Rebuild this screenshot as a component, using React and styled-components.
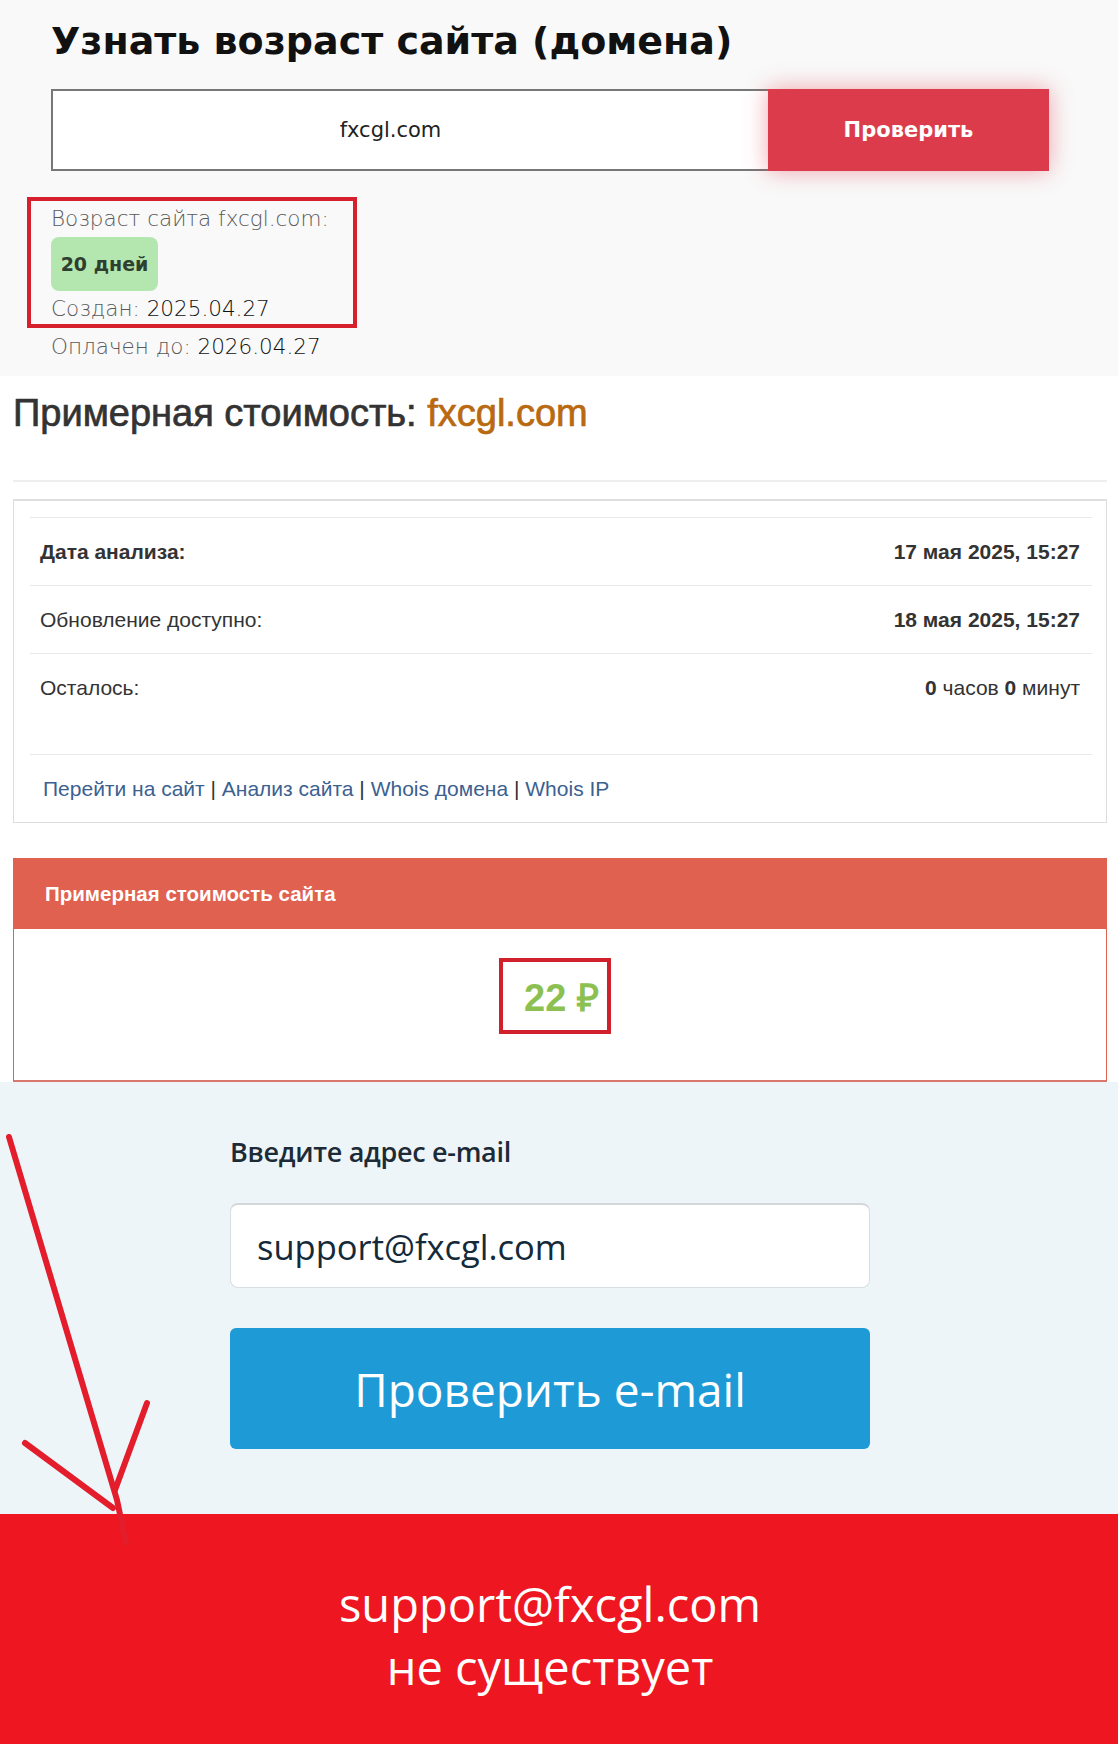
import React from "react";
import styled, { createGlobalStyle } from "styled-components";

const GlobalStyle = createGlobalStyle`
	* {
		box-sizing: border-box;
	}
	body {
		margin: 0;
		background: #fff;
		font-family: "Liberation Sans", Arial, sans-serif;
	}
	p {
		margin: 0;
	}
`;

const rows = [
	{ label: "Дата анализа:", strongLabel: true, value: <b>17 мая 2025, 15:27</b> },
	{ label: "Обновление доступно:", value: <b>18 мая 2025, 15:27</b> },
	{
		label: "Осталось:",
		value: (
			<>
				<b>0</b> часов <b>0</b> минут
			</>
		),
	},
];

const links = ["Перейти на сайт", "Анализ сайта", "Whois домена", "Whois IP"];

function App() {
	return (
		<Page>
			<GlobalStyle />
			<AgeSection>
				<Title>Узнать возраст сайта (домена)</Title>
				<SearchForm>
					<DomainInput value="fxcgl.com" readOnly />
					<CheckButton>Проверить</CheckButton>
				</SearchForm>
				<ResultBox>
					<InfoLine>Возраст сайта fxcgl.com:</InfoLine>
					<AgeBadge>20 дней</AgeBadge>
					<InfoLine>
						Создан: <Value>2025.04.27</Value>
					</InfoLine>
				</ResultBox>
				<InfoLine $gap>
					Оплачен до: <Value>2026.04.27</Value>
				</InfoLine>
			</AgeSection>

			<CostSection>
				<CostHeading>
					Примерная стоимость: <Domain>fxcgl.com</Domain>
				</CostHeading>
				<Divider />
				<InfoCard>
					{rows.map((row) => (
						<Row key={row.label}>
							<RowLabel $bold={row.strongLabel}>{row.label}</RowLabel>
							<RowValue>{row.value}</RowValue>
						</Row>
					))}
					<LinksBar>
						{links.map((link, i) => (
							<React.Fragment key={link}>
								{i > 0 && <Pipe> | </Pipe>}
								<LinkItem href="#">{link}</LinkItem>
							</React.Fragment>
						))}
					</LinksBar>
				</InfoCard>
				<PriceCard>
					<PriceHeader>Примерная стоимость сайта</PriceHeader>
					<PriceBody>
						<PriceMark>22 ₽</PriceMark>
					</PriceBody>
				</PriceCard>
			</CostSection>

			<EmailSection>
				<EmailForm>
					<EmailLabel>Введите адрес e-mail</EmailLabel>
					<EmailInput value="support@fxcgl.com" readOnly />
					<EmailButton>Проверить e-mail</EmailButton>
				</EmailForm>
			</EmailSection>

			<ErrorBanner>
				<p>support@fxcgl.com</p>
				<p>не существует</p>
			</ErrorBanner>

			<Arrow viewBox="0 0 160 420" width="160" height="420">
				<g
					stroke="#e31d2b"
					strokeWidth="6"
					strokeLinecap="round"
					strokeLinejoin="round"
					fill="none"
				>
					<path d="M9 7 L117 370 L126 413" />
					<path d="M25 313 L113 378" />
					<path d="M147 273 L115 360" />
				</g>
			</Arrow>
		</Page>
	);
}

export default App;

const Page = styled.div`
	position: relative;
	width: 1118px;
	overflow: hidden;
`;

/* ---------- top block ---------- */
const AgeSection = styled.section`
	background: #f9f9f9;
	height: 376px;
	padding: 18px 0 0 51px;
	font-family: "DejaVu Sans", Verdana, sans-serif;
`;
const Title = styled.h1`
	margin: 0;
	font-size: 38px;
	line-height: 46px;
	font-weight: 700;
	color: #111;
`;
const SearchForm = styled.div`
	display: flex;
	margin-top: 25px;
	height: 82px;
`;
const DomainInput = styled.input`
	width: 717px;
	height: 100%;
	border: 2px solid #777;
	border-right: none;
	background: #fff;
	padding: 0 40px 0 0;
	text-align: center;
	font-family: "DejaVu Sans", Verdana, sans-serif;
	font-size: 21px;
	color: #222;
	outline: none;
`;
const CheckButton = styled.button`
	width: 281px;
	height: 100%;
	border: none;
	background: #dc3b4b;
	color: #fff;
	font-family: "DejaVu Sans", Verdana, sans-serif;
	font-weight: 700;
	font-size: 21px;
	box-shadow: 0 0 22px rgba(226, 60, 78, 0.45);
	cursor: pointer;
`;
const ResultBox = styled.div`
	width: 330px;
	margin: 26px 0 0 -24px;
	padding: 4px 0 2px 20px;
	border: 4px solid #d6202e;
`;
const InfoLine = styled.p`
	font-size: 21.5px;
	line-height: 27px;
	color: #5a5a5a;
	margin-top: ${(p) => (p.$gap ? "5px" : "0")} !important;
	font-weight: 300;
	white-space: nowrap;
`;
const Value = styled.span`
	color: #111;
`;
const AgeBadge = styled.div`
	display: inline-flex;
	align-items: center;
	justify-content: center;
	width: 107px;
	height: 54px;
	margin: 5px 0 4px;
	border-radius: 8px;
	background: #b4e6b0;
	color: #2f3f2f;
	font-weight: 700;
	font-size: 19px;
`;

/* ---------- cost block ---------- */
const CostSection = styled.section`
	padding: 14px 11px 0 13px;
	background: #fff;
`;
const CostHeading = styled.h2`
	margin: 0;
	font-size: 38px;
	line-height: 46px;
	font-weight: 400;
	color: #333;
	-webkit-text-stroke: 0.7px #333;
`;
const Domain = styled.span`
	color: #b9690f;
	-webkit-text-stroke: 0.7px #b9690f;
`;
const Divider = styled.hr`
	margin: 44px 0 0;
	border: none;
	border-top: 2px solid #eeeeee;
`;
const InfoCard = styled.div`
	margin-top: 17px;
	border: 1px solid #dddddd;
	border-top: 2px solid #dedede;
	padding: 16px 14px 0 16px;
`;
const Row = styled.div`
	display: flex;
	justify-content: space-between;
	align-items: center;
	height: 68px;
	border-top: 1px solid #e9e9e9;
	padding: 0 12px 0 10px;
	font-size: 21px;
	color: #333;
`;
const RowLabel = styled.span`
	font-weight: ${(p) => (p.$bold ? 700 : 400)};
`;
const RowValue = styled.span``;
const LinksBar = styled.div`
	margin-top: 33px;
	border-top: 1px solid #e9e9e9;
	height: 68px;
	padding: 0 0 0 13px;
	display: flex;
	align-items: center;
	font-size: 21px;
	white-space: pre;
`;
const LinkItem = styled.a`
	color: #3b6190;
	text-decoration: none;
`;
const Pipe = styled.span`
	color: #333;
`;
const PriceCard = styled.div`
	margin-top: 35px;
	border: 1px solid #e06150;
	border-bottom: 2px solid #d9776c;
`;
const PriceHeader = styled.div`
	height: 70px;
	background: #e06150;
	color: #fff;
	font-size: 20.5px;
	font-weight: 700;
	display: flex;
	align-items: center;
	padding-left: 31px;
`;
const PriceBody = styled.div`
	height: 151px;
	display: flex;
	justify-content: center;
	padding: 29px 10px 0 0;
	background: #fff;
`;
const PriceMark = styled.div`
	width: 112px;
	height: 76px;
	border: 4px solid #d0202c;
	display: flex;
	align-items: center;
	padding-left: 21px;
	font-size: 38px;
	font-weight: 700;
	color: #8cc152;
`;

/* ---------- email block ---------- */
const EmailSection = styled.section`
	background: #eef5f9;
	padding: 54px 0 65px 230px;
	font-family: "Open Sans", sans-serif;
`;
const EmailForm = styled.div`
	width: 640px;
	display: flex;
	flex-direction: column;
`;
const EmailLabel = styled.label`
	font-size: 27px;
	line-height: 31px;
	font-weight: 600;
	color: #1c2b36;
	letter-spacing: -0.3px;
`;
const EmailInput = styled.input`
	margin-top: 36px;
	height: 85px;
	border: 1px solid #d7dde1;
	border-top: 2px solid #d3d7da;
	border-radius: 8px;
	background: #fff;
	padding: 0 0 0 26px;
	font-family: "Open Sans", sans-serif;
	font-size: 34.5px;
	color: #142a3a;
	outline: none;
`;
const EmailButton = styled.button`
	margin-top: 40px;
	height: 121px;
	border: none;
	border-radius: 6px;
	background: #1e9ad6;
	color: #fff;
	font-family: "Open Sans", sans-serif;
	font-size: 46px;
	cursor: pointer;
`;

const ErrorBanner = styled.section`
	height: 231px;
	background: #ee1620;
	padding: 59px 18px 0 0;
	text-align: center;
	color: #fff;
	font-family: "Open Sans", sans-serif;
	font-size: 47px;
	line-height: 63px;
`;

const Arrow = styled.svg`
	position: absolute;
	left: 0;
	top: 1130px;
	pointer-events: none;
`;
